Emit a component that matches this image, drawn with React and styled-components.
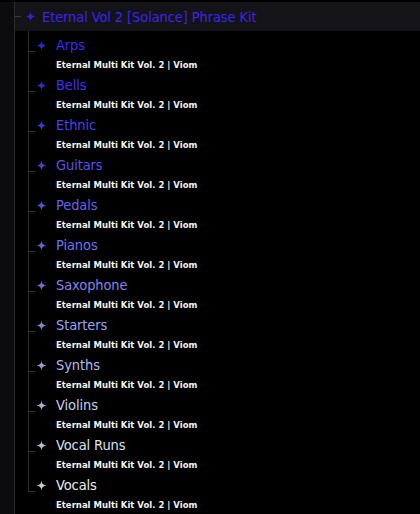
import React from 'react'
import styled, { createGlobalStyle } from 'styled-components'

const GlobalStyle = createGlobalStyle`
  html, body {
    margin: 0;
    padding: 0;
    background: #000;
  }
  body {
    width: 420px;
    height: 514px;
    overflow: hidden;
  }
`

const items = [
  { name: 'Arps', color: '#3d2cf4' },
  { name: 'Bells', color: '#4132f2' },
  { name: 'Ethnic', color: '#4a42f0' },
  { name: 'Guitars', color: '#5650f0' },
  { name: 'Pedals', color: '#6464f0' },
  { name: 'Pianos', color: '#7272f0' },
  { name: 'Saxophone', color: '#8484f0' },
  { name: 'Starters', color: '#9aa4f0' },
  { name: 'Synths', color: '#aebcf0' },
  { name: 'Violins', color: '#c4d2f0' },
  { name: 'Vocal Runs', color: '#dae2f0' },
  { name: 'Vocals', color: '#eeeeee' },
]

// four-pointed sparkle used as the node bullet
const Star = ({ color }) => (
  <StarBox viewBox="0 0 11 11" width="11" height="11">
    <path
      d="M5.5 0.5 Q5.8 5.2 10.5 5.5 Q5.8 5.8 5.5 10.5 Q5.2 5.8 0.5 5.5 Q5.2 5.2 5.5 0.5 Z"
      fill={color}
    />
    <path d="M5.5 4.3 L6.7 5.5 L5.5 6.7 L4.3 5.5 Z" fill={color} />
  </StarBox>
)

const App = () => {
  return (
    <Page>
      <GlobalStyle />
      <Gutter />
      <Main>
        <Header>
          <HeaderTick />
          <Star color="#3a26e8" />
          <HeaderTitle>Eternal Vol 2 [Solance] Phrase Kit</HeaderTitle>
        </Header>
        <Children>
          {items.map((item, i) => (
            <Item key={item.name} last={i === items.length - 1 ? 1 : 0}>
              <TitleRow>
                <Star color={item.color} />
                <ItemTitle color={item.color}>{item.name}</ItemTitle>
              </TitleRow>
              <Sub>Eternal Multi Kit Vol. 2 | Viom</Sub>
            </Item>
          ))}
        </Children>
      </Main>
    </Page>
  )
}

const Page = styled.div`
  display: flex;
  width: 420px;
  height: 514px;
  padding-top: 2px;
  box-sizing: border-box;
  background: #000;
`

const Gutter = styled.div`
  width: 14px;
  flex: none;
  background: #0c0c0e;
  border-right: 1px solid #2c2c2e;
`

const Main = styled.div`
  flex: 1;
  display: flex;
  flex-direction: column;
`

const Header = styled.div`
  height: 29px;
  display: flex;
  align-items: center;
  background: #141318;
`

const HeaderTick = styled.span`
  width: 6px;
  height: 1px;
  background: #3a3a3c;
  margin-right: 4px;
`

const StarBox = styled.svg`
  flex: none;
  display: block;
  opacity: 0.85;
`

const TitleText = styled.span`
  font-family: "DejaVu Sans Condensed", "Liberation Sans Narrow", "DejaVu Sans", sans-serif;
  font-stretch: condensed;
  font-size: 14.5px;
  letter-spacing: -0.1px;
  white-space: nowrap;
`

const HeaderTitle = styled(TitleText)`
  margin-left: 6px;
  color: #3c24f0;
`

const Children = styled.div`
  margin-left: 13px;
  display: flex;
  flex-direction: column;
`

const Item = styled.div`
  position: relative;
  height: 40px;
  box-sizing: border-box;
  border-left: 1px solid ${({ last }) => (last ? 'transparent' : '#2e2e30')};
  padding-left: 7px;

  &::before {
    content: '';
    position: absolute;
    left: -1px;
    top: 0;
    width: 6px;
    height: 20px;
    border-left: 1px solid #2e2e30;
    border-bottom: 1px solid #2e2e30;
  }
`

const TitleRow = styled.div`
  height: 28px;
  display: flex;
  align-items: center;
`

const ItemTitle = styled(TitleText)`
  margin-left: 9px;
  color: ${({ color }) => color};
`

const Sub = styled.div`
  margin-top: 1px;
  padding-left: 20px;
  font-family: "DejaVu Sans", Verdana, sans-serif;
  font-weight: bold;
  font-size: 8.5px;
  line-height: 10px;
  color: #f4f4f4;
  white-space: nowrap;
`

export default App
